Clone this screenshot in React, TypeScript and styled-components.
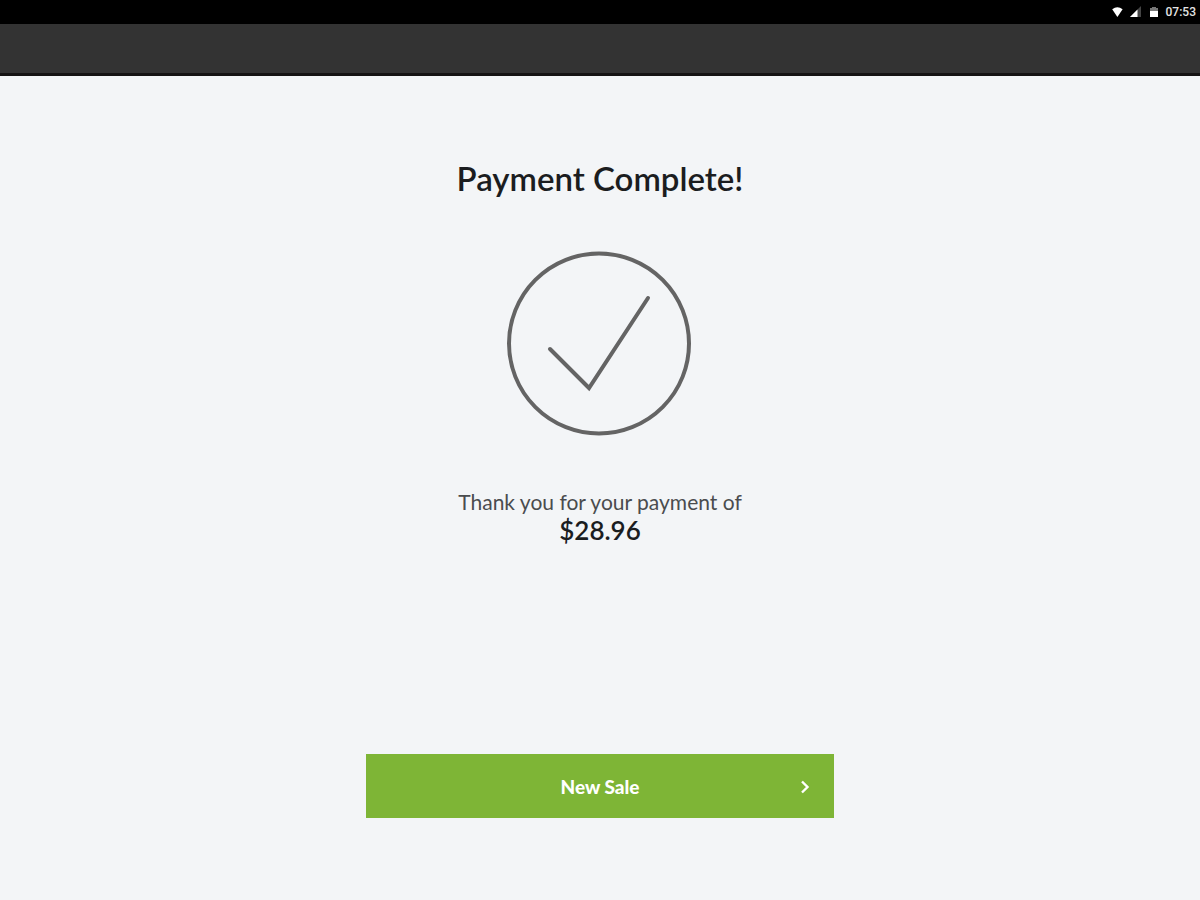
import React from "react";
import styled, { createGlobalStyle } from "styled-components";

const GlobalStyle = createGlobalStyle`
  *, *::before, *::after { box-sizing: border-box; }
  body {
    margin: 0;
    background: #f3f5f7;
    color: #1b1d1f;
    font-family: Lato, "Liberation Sans", sans-serif;
  }
`;

const Screen = styled.div`
  display: flex;
  flex-direction: column;
  min-height: 100vh;
`;

const StatusBar = styled.div`
  display: flex;
  align-items: center;
  justify-content: flex-end;
  height: 24px;
  padding-right: 4px;
  background: #000;
  color: #e4e4e4;
`;

const StatusIcon = styled.svg`
  width: 12px;
  height: 12px;
  margin-right: 6px;
  fill: #fff;
`;

const Clock = styled.time`
  font-family: Roboto, sans-serif;
  font-size: 12px;
  line-height: 24px;
  font-weight: 500;
`;

const AppBar = styled.header`
  height: 52px;
  background: #333;
  border-bottom: 3px solid #151313;
`;

const Content = styled.main`
  flex: 1;
  display: flex;
  flex-direction: column;
  align-items: center;
  padding: 80px 24px 82px;
  text-align: center;
`;

const Title = styled.h1`
  margin: 0;
  font-size: 33px;
  line-height: 44px;
  font-weight: 600;
`;

const CheckMark = styled.svg`
  width: 186px;
  height: 186px;
  margin: 51px 0;
  fill: none;
  stroke: #646464;
  stroke-width: 4;
  stroke-linecap: round;
`;

const Message = styled.p`
  margin: 0;
  font-size: 21px;
  line-height: 28px;
  font-weight: 400;
  color: #4a4c4e;
`;

const Amount = styled.strong`
  display: block;
  font-size: 26px;
  font-weight: 600;
  color: #1b1d1f;
`;

const NewSaleButton = styled.button`
  display: grid;
  grid-template-columns: 1fr auto 1fr;
  align-items: center;
  width: 100%;
  max-width: 468px;
  height: 64px;
  margin-top: auto;
  padding: 2px 23px 0;
  border: 0;
  background: #7eb536;
  color: #fff;
  font: 900 19px/24px Lato, "Liberation Sans", sans-serif;
  cursor: pointer;
`;

const ButtonLabel = styled.span`
  grid-column: 2;
`;

const Chevron = styled.svg`
  justify-self: end;
  width: 12px;
  height: 14px;
  fill: none;
  stroke: #fff;
  stroke-width: 2.4;
`;

export default function App() {
  return (
    <>
      <GlobalStyle />
      <Screen>
        <StatusBar>
          <StatusIcon viewBox="0 0 12 12" aria-label="Wi-Fi">
            <path d="M.2 3.2Q5.4-.6 10.6 3.2L5.4 11Z" />
          </StatusIcon>
          <StatusIcon viewBox="0 0 12 12" aria-label="Mobile signal">
            <path d="M0 11 11 0V11Z" fill="#444" />
            <path d="M0 11 7.5 3.5V11Z" />
          </StatusIcon>
          <StatusIcon viewBox="0 0 12 12" aria-label="Battery">
            <path d="M4 1H8V2H10V5H2V2H4Z" fill="#777" />
            <path d="M2 5H10V11H2Z" />
          </StatusIcon>
          <Clock>07:53</Clock>
        </StatusBar>
        <AppBar />
        <Content>
          <Title>Payment Complete!</Title>
          <CheckMark viewBox="0 0 186 186" aria-hidden="true">
            <circle cx="92" cy="92.5" r="90" />
            <path d="M43 98 82 137 141 47" />
          </CheckMark>
          <Message>
            Thank you for your payment of
            <Amount>$28.96</Amount>
          </Message>
          <NewSaleButton type="button">
            <ButtonLabel>New Sale</ButtonLabel>
            <Chevron viewBox="0 0 12 14" aria-hidden="true">
              <path d="M3 1.5 8.5 7 3 12.5" />
            </Chevron>
          </NewSaleButton>
        </Content>
      </Screen>
    </>
  );
}
